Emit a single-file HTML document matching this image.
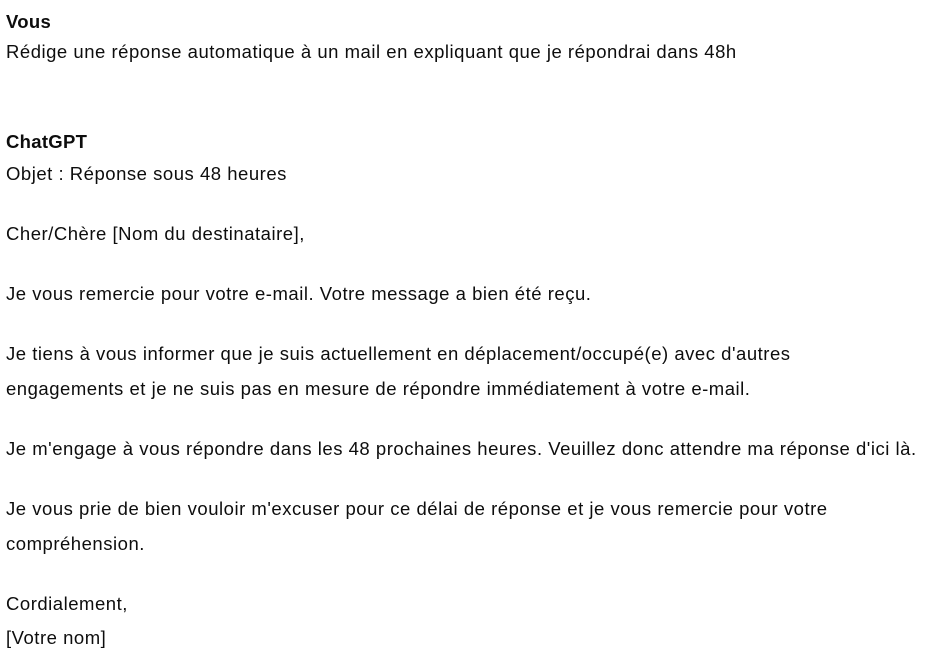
<!DOCTYPE html>
<html><head><meta charset="utf-8"><style>
body{margin:0;width:938px;height:657px;background:#fff;overflow:hidden;font-family:"Liberation Sans",sans-serif;color:#0d0d0d;font-size:18.5px;letter-spacing:0.52px}
div{position:absolute;left:6px;line-height:24px;white-space:nowrap}
b{font-weight:bold;letter-spacing:0.3px}
</style></head><body>
<div style="top:10px"><b>Vous</b></div>
<div style="top:40px">Rédige une réponse automatique à un mail en expliquant que je répondrai dans 48h</div>
<div style="top:130px"><b>ChatGPT</b></div>
<div style="top:162px">Objet : Réponse sous 48 heures</div>
<div style="top:222px">Cher/Chère [Nom du destinataire],</div>
<div style="top:282px">Je vous remercie pour votre e-mail. Votre message a bien été reçu.</div>
<div style="top:342px">Je tiens à vous informer que je suis actuellement en déplacement/occupé(e) avec d'autres</div>
<div style="top:377px">engagements et je ne suis pas en mesure de répondre immédiatement à votre e-mail.</div>
<div style="top:437px">Je m'engage à vous répondre dans les 48 prochaines heures. Veuillez donc attendre ma réponse d'ici là.</div>
<div style="top:497px">Je vous prie de bien vouloir m'excuser pour ce délai de réponse et je vous remercie pour votre</div>
<div style="top:532px">compréhension.</div>
<div style="top:592px">Cordialement,</div>
<div style="top:626px">[Votre nom]</div>
</body></html>
